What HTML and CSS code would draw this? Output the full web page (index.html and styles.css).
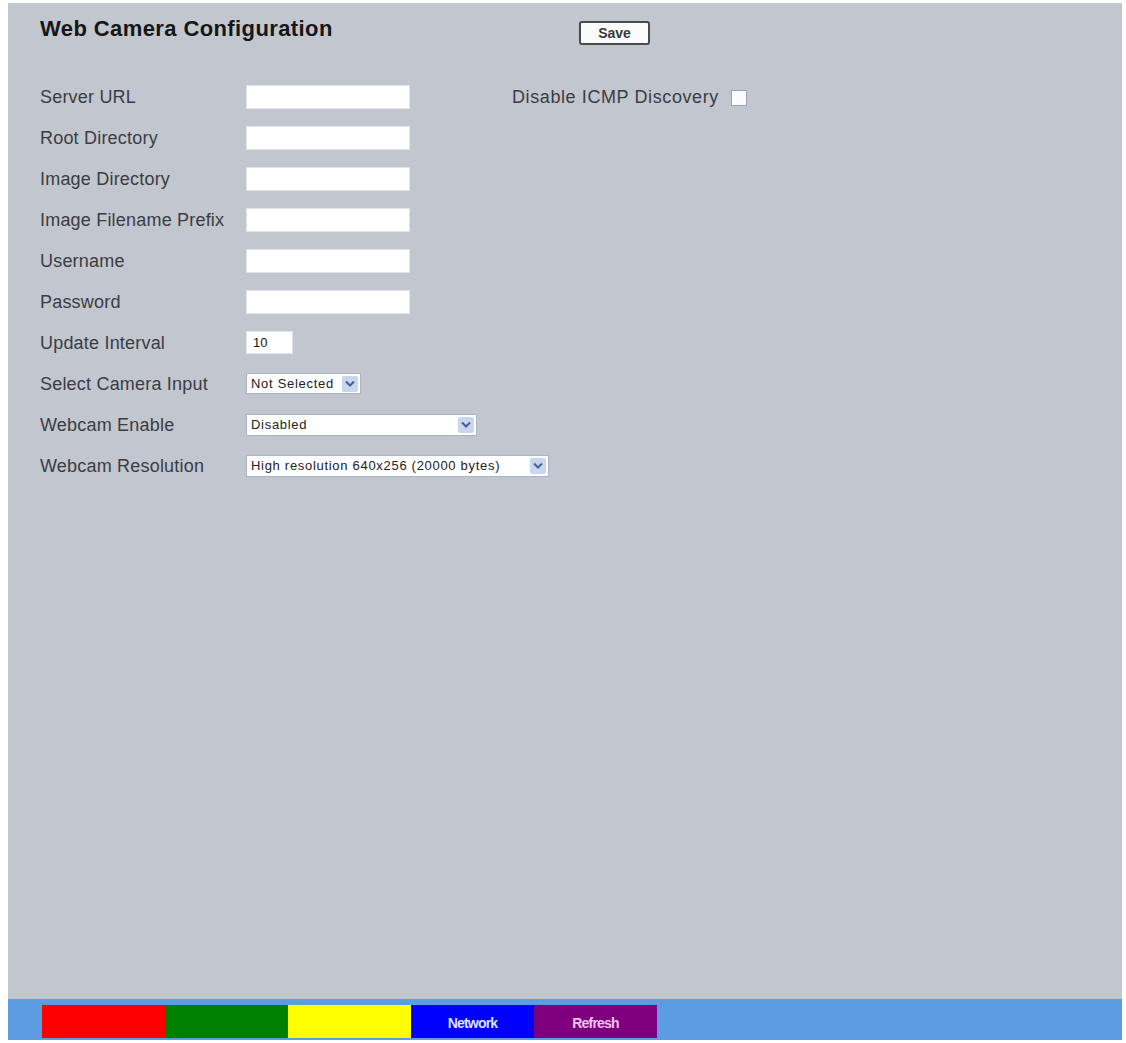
FILE: index.html
```html
<!DOCTYPE html>
<html lang="en">
<head>
  <meta charset="UTF-8">
  <title>Web Camera Configuration</title>
  <link rel="stylesheet" href="styles.css">
</head>
<body>

  <div class="panel">

    <!-- header -->
    <div class="header">
      <h1>Web Camera Configuration</h1>
      <button class="save">Save</button>
    </div>

    <!-- settings form -->
    <div class="form">
      <div class="fields">
        <label>Server URL</label>
        <div class="cell"><input type="text" class="text"></div>

        <label>Root Directory</label>
        <div class="cell"><input type="text" class="text"></div>

        <label>Image Directory</label>
        <div class="cell"><input type="text" class="text"></div>

        <label>Image Filename Prefix</label>
        <div class="cell"><input type="text" class="text"></div>

        <label>Username</label>
        <div class="cell"><input type="text" class="text"></div>

        <label>Password</label>
        <div class="cell"><input type="password" class="text"></div>

        <label>Update Interval</label>
        <div class="cell"><input type="text" class="text short" value="10"></div>

        <label>Select Camera Input</label>
        <div class="cell">
          <div class="dropdown w-input">
            <select><option>Not Selected</option></select>
            <span class="arrow"><svg width="10" height="7" viewBox="0 0 10 7"><path d="M1 1.5 L5 5.5 L9 1.5" fill="none" stroke="#4a5f8c" stroke-width="2"/></svg></span>
          </div>
        </div>

        <label>Webcam Enable</label>
        <div class="cell">
          <div class="dropdown w-enable">
            <select><option>Disabled</option></select>
            <span class="arrow"><svg width="10" height="7" viewBox="0 0 10 7"><path d="M1 1.5 L5 5.5 L9 1.5" fill="none" stroke="#4a5f8c" stroke-width="2"/></svg></span>
          </div>
        </div>

        <label>Webcam Resolution</label>
        <div class="cell">
          <div class="dropdown w-res">
            <select><option>High resolution 640x256 (20000 bytes)</option></select>
            <span class="arrow"><svg width="10" height="7" viewBox="0 0 10 7"><path d="M1 1.5 L5 5.5 L9 1.5" fill="none" stroke="#4a5f8c" stroke-width="2"/></svg></span>
          </div>
        </div>
      </div>

      <div class="side">
        <label>Disable ICMP Discovery</label>
        <input type="checkbox" class="check">
      </div>
    </div>

    <!-- bottom navigation -->
    <div class="navbar">
      <a class="nav red"></a>
      <a class="nav green"></a>
      <a class="nav yellow"></a>
      <a class="nav blue">Network</a>
      <a class="nav purple">Refresh</a>
    </div>

  </div>

</body>
</html>
```

FILE: styles.css
```css
html, body {
  margin: 0;
  background: #fff;
}
body {
  font-family: "Liberation Sans", Arial, sans-serif;
  padding: 3px 4px 3px 8px;
}
.panel {
  height: 1037px;
  background: #c1c6cf;
  display: flex;
  flex-direction: column;
}

/* header */
.header {
  height: 73px;
  display: flex;
  align-items: flex-start;
  padding-left: 32px;
}
h1 {
  margin: 13px 0 0;
  width: 539px;
  font-size: 22px;
  font-weight: bold;
  color: #161616;
  letter-spacing: 0.4px;
}
.save {
  margin-top: 18px;
  width: 71px;
  height: 24px;
  padding: 0;
  background: #fbfbfb;
  border: 2px solid #4a4a4a;
  border-radius: 3px;
  font-family: "Liberation Sans", Arial, sans-serif;
  font-size: 14px;
  font-weight: bold;
  color: #3a3a3a;
}

/* form */
.form {
  flex: 1;
  display: flex;
  padding-left: 32px;
}
.fields {
  display: grid;
  grid-template-columns: 206px 266px;
  grid-auto-rows: 41px;
  align-items: center;
}
label {
  font-size: 18px;
  letter-spacing: 0.2px;
  color: #3b3d42;
  padding-top: 1px;
  white-space: nowrap;
}
.cell {
  display: flex;
  align-items: center;
}
.text {
  box-sizing: border-box;
  width: 164px;
  height: 24px;
  margin: 0;
  padding: 2px 6px;
  background: #fff;
  border: 1px solid #dfe2e8;
  font-family: "Liberation Sans", Arial, sans-serif;
  font-size: 13px;
  color: #111;
}
.text.short {
  width: 47px;
  height: 23px;
}
.dropdown {
  flex-shrink: 0;
  box-sizing: border-box;
  height: 22px;
  display: flex;
  align-items: center;
  background: #fff;
  border: 1px solid #a9b4c6;
}
.dropdown select {
  flex: 1;
  min-width: 0;
  -webkit-appearance: none;
  appearance: none;
  border: none;
  background: transparent;
  padding: 0 4px;
  font-family: "Liberation Sans", Arial, sans-serif;
  font-size: 13px;
  letter-spacing: 0.7px;
  color: #222;
}
.arrow {
  width: 16px;
  height: 16px;
  margin-right: 2px;
  background: #c8d6f2;
  border-radius: 2px;
  display: flex;
  align-items: center;
  justify-content: center;
}
.w-input {
  width: 115px;
  height: 21px;
}
.w-enable {
  width: 231px;
}
.w-res {
  width: 303px;
}

.side {
  height: 41px;
  display: flex;
  align-items: center;
}
.side label {
  letter-spacing: 0.6px;
}
.check {
  -webkit-appearance: none;
  appearance: none;
  width: 16px;
  height: 16px;
  margin: 2px 0 0 12px;
  background: #fbfbfd;
  border: 1px solid #9aa3b3;
}

/* bottom navigation */
.navbar {
  height: 41px;
  box-sizing: border-box;
  padding: 6px 0 2px 34px;
  background: #5b9de0;
  display: flex;
}
.nav {
  width: 123px;
  display: flex;
  align-items: center;
  justify-content: center;
  font-size: 14px;
  font-weight: bold;
  letter-spacing: -0.8px;
  padding-top: 3px;
}
.red { background: #fe0000; }
.green { background: #017f01; }
.yellow { background: #fefe00; }
.blue { background: #0000fe; color: #dfe2ff; }
.purple { background: #7f007f; color: #f2c2f0; }
```
